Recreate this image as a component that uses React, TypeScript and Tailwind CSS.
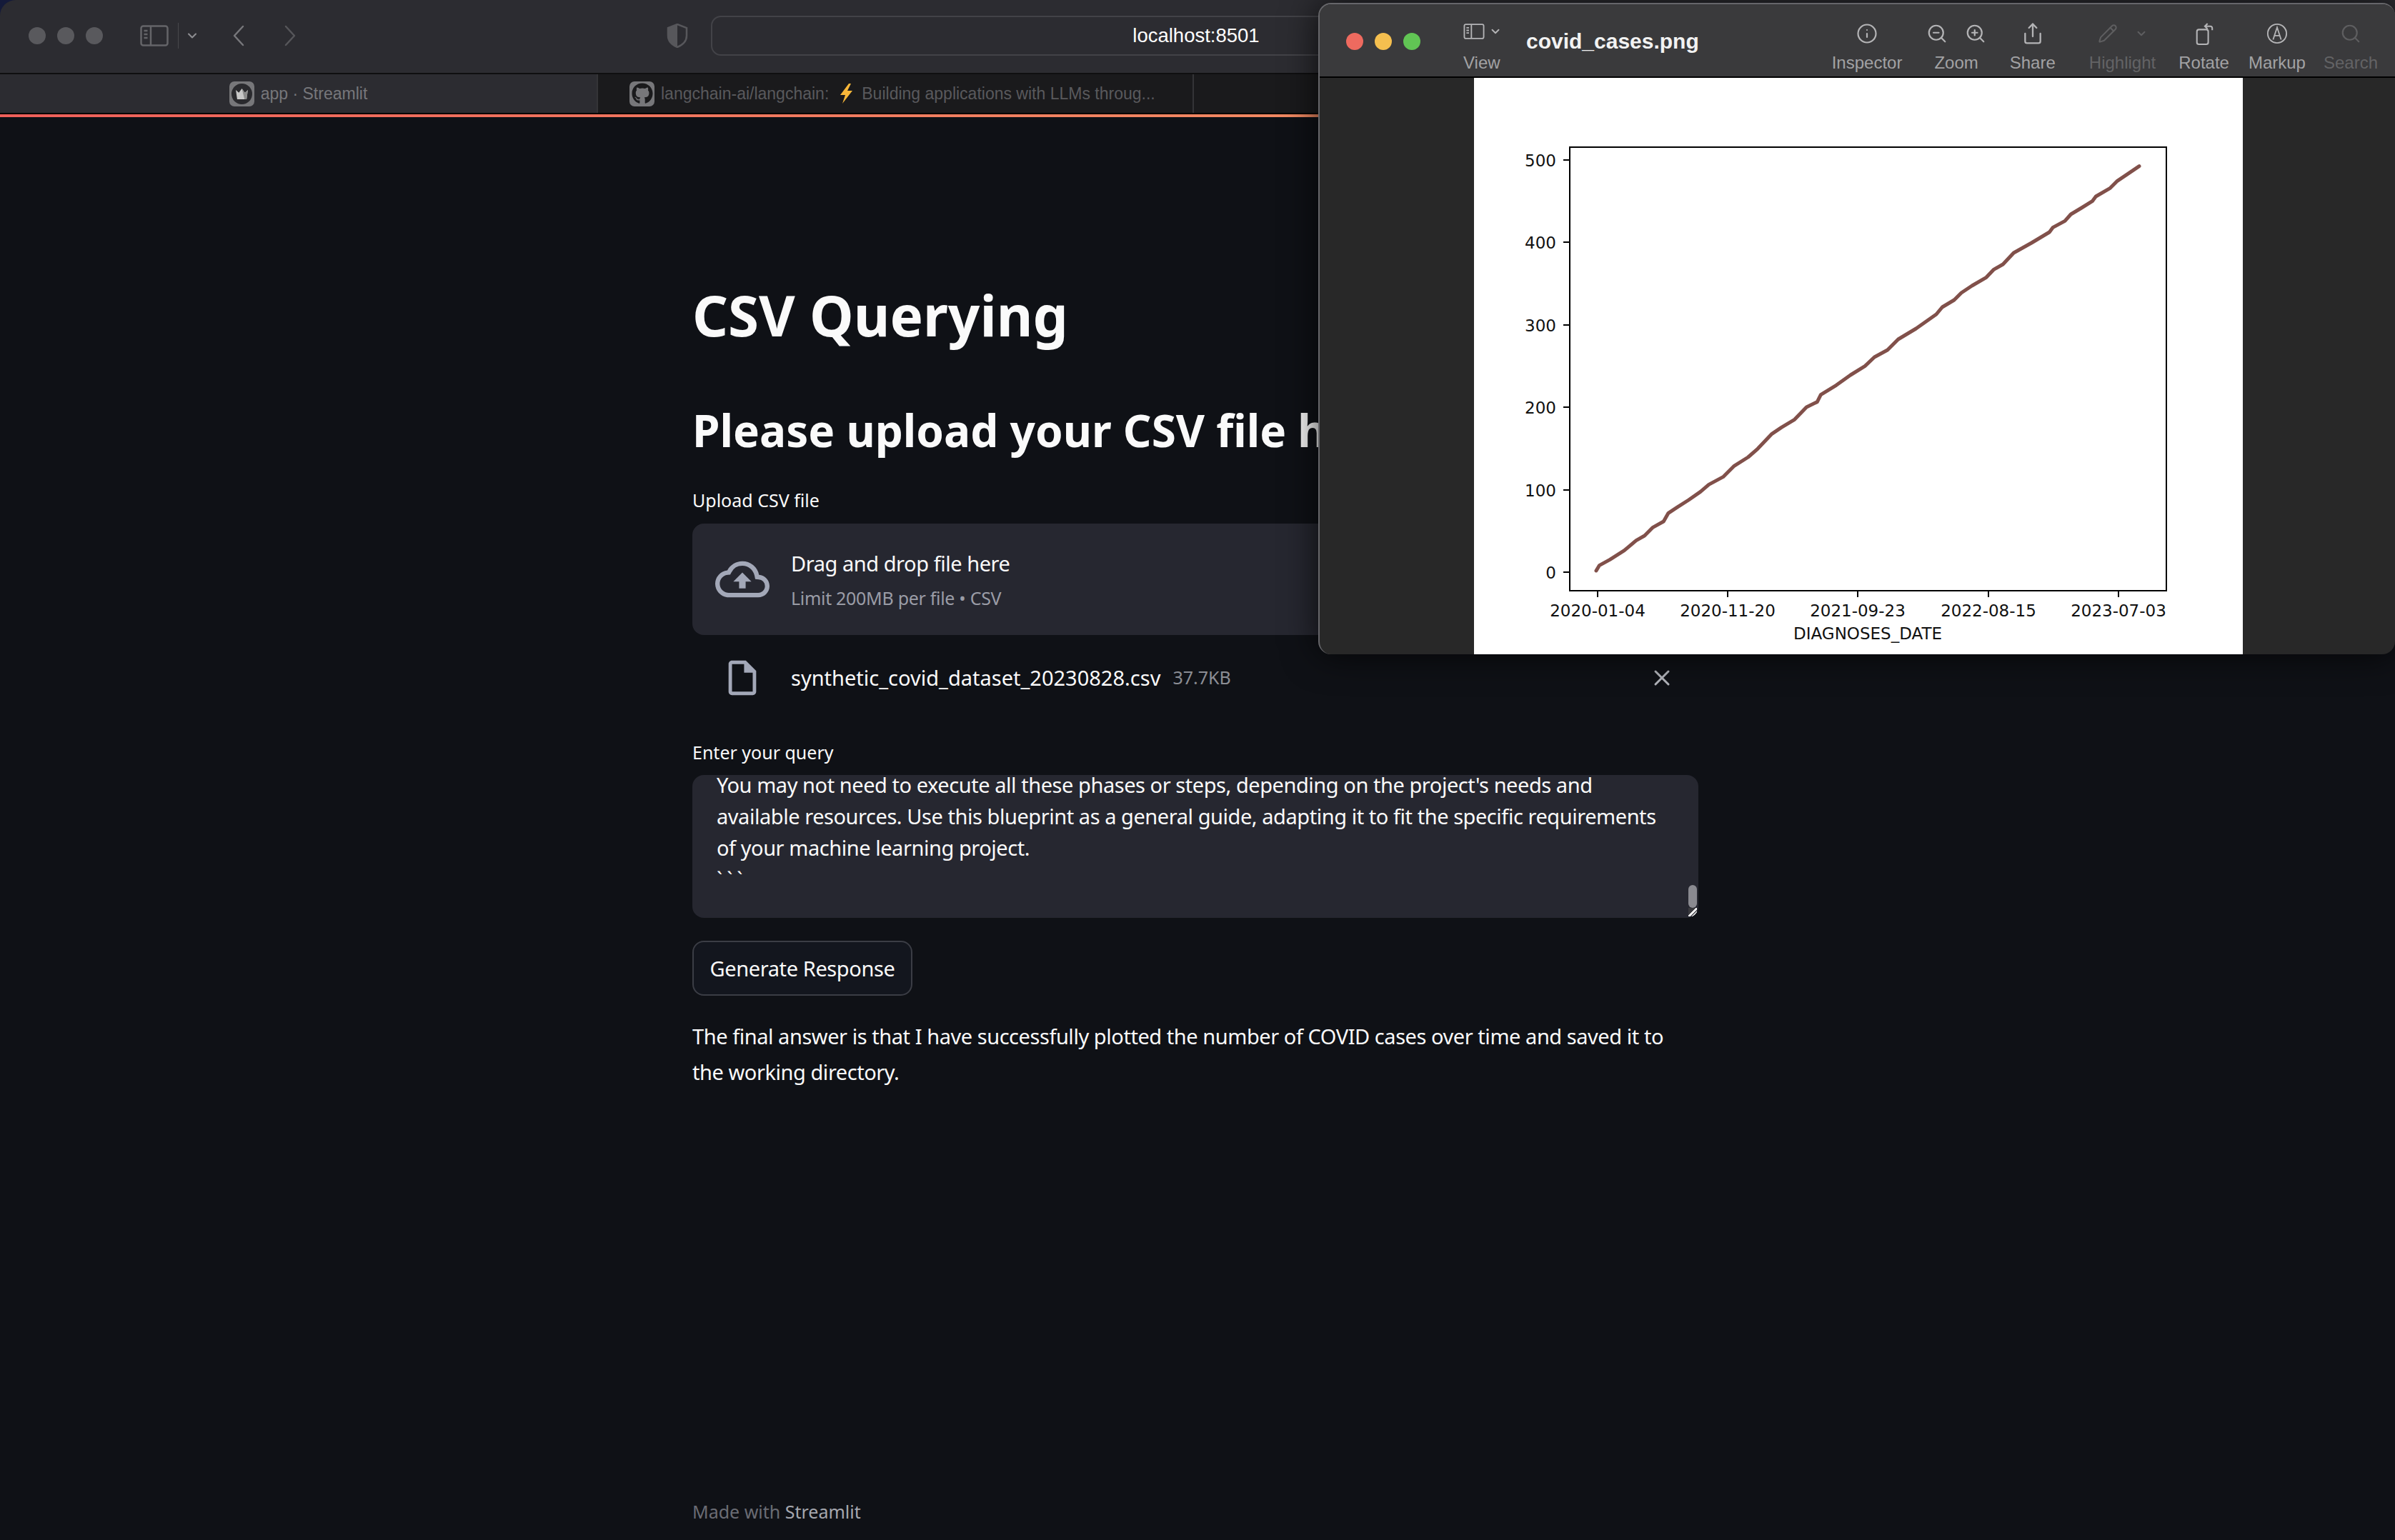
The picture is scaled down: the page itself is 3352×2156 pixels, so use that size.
import React from 'react';
import { Info, Search, Share, X, ZoomIn, ZoomOut, ChevronDown, Pencil } from 'lucide-react';
import { FaGithub } from 'react-icons/fa';
import { MdOutlineCloudUpload, MdOutlineInsertDriveFile } from 'react-icons/md';

const sans = "font-['Noto_Sans',sans-serif]";
const helv = "font-['Liberation_Sans',Arial,sans-serif]";

// traced off the reference at 3x, two overlapping crops
const lowerCurve = [[42,897],[55,875],[100,850],[160,812],[210,770],[245,750],[280,715],[325,690],[345,655],[380,632],[430,600],[480,565],[515,535],[575,503],[620,458],[680,420],[720,385],[780,322],[820,295],[875,262],[925,210],[970,188],[985,158],[1050,118],[1110,75],[1170,38]];
const upperCurve = [[0,908],[40,870],[95,840],[140,795],[215,750],[300,690],[325,660],[375,630],[405,600],[450,570],[510,535],[540,503],[580,480],[625,432],[700,390],[775,345],[790,325],[840,298],[865,270],[910,243],[955,215],[970,195],[1030,160],[1060,130],[1100,103],[1152,68]];
const curve = [
  ...lowerCurve.map(([x, y]) => `${2220 + x / 3},${500 + y / 3}`),
  ...upperCurve.map(([x, y]) => `${2610 + x / 3},${210 + y / 3}`),
].join(' ');

const yTicks = [
  { label: '500', y: 224 },
  { label: '400', y: 339 },
  { label: '300', y: 455 },
  { label: '200', y: 570 },
  { label: '100', y: 686 },
  { label: '0', y: 801 },
];
const xTicks = [
  { label: '2020-01-04', x: 2236 },
  { label: '2020-11-20', x: 2418 },
  { label: '2021-09-23', x: 2600 },
  { label: '2022-08-15', x: 2783 },
  { label: '2023-07-03', x: 2965 },
];

function SidebarIcon({ className }: { className?: string }) {
  return (
    <svg viewBox="0 0 40 30" fill="none" stroke="currentColor" strokeWidth="2.5" className={className}>
      <rect x="1.5" y="1.5" width="37" height="27" rx="3" />
      <path d="M15 1.5v27M5.5 8h5M5.5 13h5M5.5 18h5" />
    </svg>
  );
}

function Favicon({ children }: { children: React.ReactNode }) {
  return (
    <span className="flex h-[35px] w-[35px] shrink-0 items-center justify-center rounded-[7px] bg-[#77777a]">
      {children}
    </span>
  );
}

function Crown() {
  return (
    <span className="flex h-[29px] w-[29px] items-center justify-center rounded-full bg-[#2a2a2e]">
      <svg viewBox="0 0 20 16" className="h-[15px] w-[19px]">
        <path d="M1 2l4.5 4L10 0l4.5 6L19 2l-2 14H3z" fill="#c8c8c8" />
        <path d="M10 0l4.5 6L19 2l-2 14h-3z" fill="#8d8d8d" />
      </svg>
    </span>
  );
}

function Bolt() {
  return (
    <svg viewBox="0 0 23 28" className="mr-[10px] ml-[13px] h-[28px] w-[23px] shrink-0">
      <path d="M15 0L3 16h7L6 28l14-18h-7l5-10z" fill="#f8b739" />
    </svg>
  );
}

function NavChevron({ d, className }: { d: string; className?: string }) {
  return (
    <svg viewBox="0 0 16 30" fill="none" stroke="currentColor" strokeWidth="2.5" strokeLinecap="round" strokeLinejoin="round" className={`h-[30px] w-[16px] ${className ?? ''}`}>
      <path d={d} />
    </svg>
  );
}

function BrowserChrome() {
  return (
    <header className="shrink-0">
      <div className="flex h-[102px] items-center bg-[#2c2c31] pb-[3px]">
        <div className="ml-[40px] flex gap-[16px]">
          <span className="h-[24px] w-[24px] rounded-full bg-[#59595d]" />
          <span className="h-[24px] w-[24px] rounded-full bg-[#59595d]" />
          <span className="h-[24px] w-[24px] rounded-full bg-[#59595d]" />
        </div>
        <SidebarIcon className="ml-[52px] h-[30px] w-[40px] text-[#646468]" />
        <span className="ml-[13px] h-[36px] w-px bg-[#48484c]" />
        <ChevronDown size={20} strokeWidth={2.5} className="ml-[9px] text-[#8e8e92]" />
        <NavChevron d="M14 2L2 15l12 13" className="ml-[47px] text-[#77777b]" />
        <NavChevron d="M2 2l12 13L2 28" className="ml-[56px] text-[#56565a]" />
        <svg viewBox="0 0 30 34" className="ml-[519px] h-[34px] w-[30px] text-[#57575b]">
          <path d="M15 1l13 5v11c0 8-6 13-13 16C8 30 2 25 2 17V6z" fill="none" stroke="currentColor" strokeWidth="2.5" />
          <path d="M15 1L2 6v11c0 8 6 13 13 16z" fill="currentColor" />
        </svg>
        <div className={`ml-[32px] flex h-[56px] w-[1358px] items-center justify-center rounded-[14px] border-2 border-[#434348] text-[27.5px] text-white ${helv}`}>
          localhost:8501
        </div>
      </div>
      <div className={`flex h-[56px] border-t-2 border-[#0f0f10] bg-[#1a1a1c] text-[23px] ${helv}`}>
        <div className="flex w-[835px] items-center justify-center gap-[9px] bg-[#2c2c31] text-[#77777b]">
          <Favicon><Crown /></Favicon>
          <span>app · Streamlit</span>
        </div>
        <div className="flex w-[836px] items-center border-x-2 border-[#343437] pl-[44px] text-[#59595c]">
          <Favicon><FaGithub size={30} className="text-[#1a1a1c]" /></Favicon>
          <span className="ml-[9px]">langchain-ai/langchain:</span>
          <Bolt />
          <span>Building applications with LLMs throug...</span>
        </div>
      </div>
      <div className="h-[2px] bg-black" />
      <div className="h-[4px] bg-gradient-to-r from-[#ef5f5a] to-[#f0a868]" />
    </header>
  );
}

function StreamlitPage() {
  return (
    <main className={`flex min-h-0 flex-1 bg-[#0f1116] pl-[969px] text-[#fafafa] ${sans}`}>
      <div className="flex w-[1408px] flex-col">
        <h1 className="mt-[228px] text-[78px] leading-[98px] font-bold">CSV Querying</h1>
        <h2 className="mt-[68px] text-[62px] leading-[88px] font-bold whitespace-nowrap">Please upload your CSV file here</h2>

        <label className="mt-[36px] text-[25px] leading-[36px]">Upload CSV file</label>
        <div className="mt-[15px] flex h-[156px] items-center rounded-[16px] bg-[#262730] pl-[32px]">
          <MdOutlineCloudUpload size={76} className="text-[#a3a8b8]" />
          <div className="mt-[3px] ml-[30px]">
            <div className="text-[29px] leading-[48px] tracking-[-0.45px]">Drag and drop file here</div>
            <div className="text-[25px] leading-[48px] tracking-[-0.3px] text-[#9a9ca6]">Limit 200MB per file • CSV</div>
          </div>
        </div>

        <div className="mt-[30px] flex h-[60px] items-center">
          <MdOutlineInsertDriveFile size={58} className="ml-[41px] text-[#a3a8b8]" />
          <span className="ml-[39px] text-[29px]">synthetic_covid_dataset_20230828.csv</span>
          <span className="ml-[17px] text-[25px] text-[#8b8d94]">37.7KB</span>
          <X size={36} strokeWidth={2} className="mr-[33px] ml-auto text-[#b4b6bd]" />
        </div>

        <label className="mt-[56px] text-[25px] leading-[36px]">Enter your query</label>
        <div className="relative mt-[14px] h-[200px] overflow-hidden rounded-[16px] bg-[#262730] px-[34px] text-[29px] leading-[44px] tracking-[-0.45px]">
          <p className="-mt-[8px]">
            You may not need to execute all these phases or steps, depending on the project's needs and available resources. Use this blueprint as a general guide, adapting it to fit the specific requirements of your machine learning project.
          </p>
          <p className="tracking-[6px]">```</p>
          <span className="absolute top-[154px] right-[2px] h-[32px] w-[12px] rounded-full bg-[#8a8a90]" />
          <span className="absolute top-[186px] right-[2px] h-[12px] w-[12px] bg-[linear-gradient(135deg,#3a3a3e_45%,#f0f0f0_45%,#f0f0f0_60%,#55555a_60%,#55555a_70%,#f0f0f0_70%)]" />
        </div>

        <button className="mt-[32px] h-[77px] w-[308px] rounded-[16px] border-2 border-[#3b3d45] bg-[#13161e] text-[29px] tracking-[-0.4px] text-[#fafafa]">
          Generate Response
        </button>

        <p className="mt-[32px] text-[29px] leading-[50px] tracking-[-0.45px]">
          The final answer is that I have successfully plotted the number of COVID cases over time and saved it to the working directory.
        </p>

        <footer className="mt-auto mb-[22px] text-[25px] leading-[36px] text-[#6a6c74]">
          Made with <span className="text-[#a5a7ae]">Streamlit</span>
        </footer>
      </div>
    </main>
  );
}

function Tool({ label, dim, className, children }: { label: string; dim?: boolean; className?: string; children: React.ReactNode }) {
  return (
    <div className={`flex flex-col items-center ${className ?? ''}`}>
      <div className={`flex h-[36px] items-center justify-center gap-[24px] ${dim ? 'text-[#5e5e60]' : 'text-[#b4b4b6]'}`}>{children}</div>
      <span className={`mt-[9px] whitespace-nowrap text-[24px] leading-[28px] ${dim ? 'text-[#636365]' : 'text-[#a2a2a4]'}`}>{label}</span>
    </div>
  );
}

function PlotImage() {
  return (
    <div className="h-[807px] w-[1076px] bg-white">
      <svg viewBox="2063 109 1076 807" className="block h-full w-full font-['DejaVu_Sans',sans-serif]">
        <rect x="2197" y="206" width="835" height="621" fill="none" stroke="#000" strokeWidth="2" />
        {yTicks.map((t) => (
          <g key={t.label}>
            <line x1="2188" x2="2197" y1={t.y} y2={t.y} stroke="#000" strokeWidth="2" />
            <text x="2178" y={t.y + 9} textAnchor="end" fontSize="23" fill="#111">{t.label}</text>
          </g>
        ))}
        {xTicks.map((t) => (
          <g key={t.label}>
            <line x1={t.x} x2={t.x} y1="827" y2="836" stroke="#000" strokeWidth="2" />
            <text x={t.x} y="863" textAnchor="middle" fontSize="23" fill="#111">{t.label}</text>
          </g>
        ))}
        <text x="2614" y="895" textAnchor="middle" fontSize="23" fill="#111">DIAGNOSES_DATE</text>
        <polyline points={curve} fill="none" stroke="#81504a" strokeWidth="5" strokeLinejoin="round" strokeLinecap="round" />
      </svg>
    </div>
  );
}

function PreviewWindow() {
  return (
    <section className={`absolute top-[4px] left-[1845px] w-[1507px] overflow-hidden rounded-[18px] border-t-2 border-l-2 border-[#66666a] bg-[#282828] shadow-[0_0_50px_rgba(0,0,0,0.75)] ${helv}`}>
      <div className="flex h-[103px] items-start border-b-2 border-black bg-[#3a3a3c] pt-[23px]">
        <div className="mt-[17px] ml-[37px] flex gap-[16px]">
          <span className="h-[24px] w-[24px] rounded-full bg-[#ee6a5f]" />
          <span className="h-[24px] w-[24px] rounded-full bg-[#f5bf4f]" />
          <span className="h-[24px] w-[24px] rounded-full bg-[#61c554]" />
        </div>
        <div className="mt-[2px] ml-[60px] flex w-[60px] flex-col">
          <div className="flex h-[26px] items-center gap-[6px] text-[#b4b4b6]">
            <SidebarIcon className="h-[22px] w-[30px] shrink-0" />
            <ChevronDown size={18} strokeWidth={2.5} className="shrink-0" />
          </div>
          <span className="mt-[17px] text-[24px] leading-[28px] text-[#a2a2a4]">View</span>
        </div>
        <span className="mt-[11px] ml-[28px] text-[30px] leading-[36px] font-bold text-[#f2f2f2]">covid_cases.png</span>

        <div className="ml-auto flex pr-[24px]">
          <Tool label="Inspector"><Info size={30} strokeWidth={1.75} /></Tool>
          <Tool label="Zoom" className="ml-[45px]">
            <ZoomOut size={30} strokeWidth={1.75} className="-ml-[14px]" />
            <ZoomIn size={30} strokeWidth={1.75} className="-mr-[14px]" />
          </Tool>
          <Tool label="Share" className="ml-[44px]"><Share size={32} strokeWidth={1.75} /></Tool>
          <Tool label="Highlight" dim className="ml-[47px]">
            <Pencil size={28} strokeWidth={1.75} />
            <ChevronDown size={18} strokeWidth={2.5} />
          </Tool>
          <Tool label="Rotate" className="ml-[32px]">
            <svg viewBox="0 0 30 34" fill="none" stroke="currentColor" strokeWidth="2.25" className="h-[32px] w-[28px]">
              <rect x="4" y="11" width="17" height="22" rx="3" />
              <path d="M16 6h8a3 3 0 0 1 3 3v3M20 2l-4 4 4 4" />
            </svg>
          </Tool>
          <Tool label="Markup" className="ml-[27px]">
            <svg viewBox="0 0 32 32" fill="none" stroke="currentColor" strokeWidth="2" className="h-[30px] w-[30px]">
              <circle cx="16" cy="16" r="14" />
              <path d="M10 25l6-18 6 18M12 19h8" />
            </svg>
          </Tool>
          <Tool label="Search" dim className="ml-[25px]"><Search size={30} strokeWidth={1.75} /></Tool>
        </div>
      </div>
      <div className="flex h-[807px]">
        <div className="w-[216px]" />
        <PlotImage />
        <div className="flex-1" />
      </div>
    </section>
  );
}

export default function App() {
  return (
    <div className="relative h-[2156px] w-[3352px] overflow-hidden bg-[#141a3a]">
      <div className="flex h-full flex-col overflow-hidden rounded-tl-[22px]">
        <BrowserChrome />
        <StreamlitPage />
      </div>
      <PreviewWindow />
    </div>
  );
}
